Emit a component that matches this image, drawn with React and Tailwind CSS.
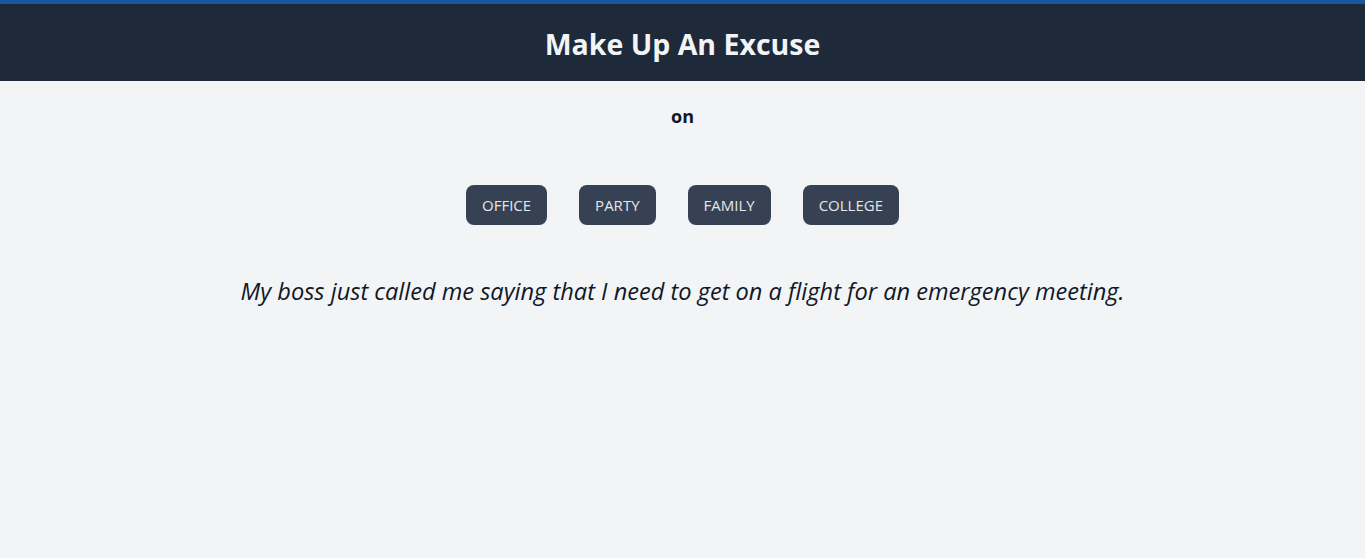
import { useState } from 'react'

// Excuses grouped by where you need to get out of.
const excuses = {
  office: [
    'My boss just called me saying that I need to get on a flight for an emergency meeting.',
    'I have to finish a report that is due first thing tomorrow morning.',
  ],
  party: [
    'I already promised a friend I would help them move this weekend.',
    'I am feeling a bit under the weather tonight.',
  ],
  family: [
    'My cousin is visiting from out of town and I have to pick them up.',
    'We have a family dinner planned that I cannot miss.',
  ],
  college: [
    'I have an exam tomorrow and I still have three chapters to cover.',
    'My group project meeting got moved to tonight.',
  ],
}

const categories = ['office', 'party', 'family', 'college']

const App = () => {
  const [excuse, setExcuse] = useState(excuses.office[0])

  // Pick a random excuse from the chosen category.
  const handleClick = category => {
    const list = excuses[category]
    setExcuse(list[Math.floor(Math.random() * list.length)])
  }

  return (
    <div
      className="min-h-screen bg-gray-100 text-gray-900"
      style={{ fontFamily: '"Open Sans", "Noto Sans", sans-serif' }}
    >
      <header className="h-[81px] border-t-4 border-[#1b55a0] bg-gray-800 flex items-center justify-center">
        <h1 className="text-[28.5px] leading-9 font-bold text-gray-100 pt-[2px]">
          Make Up An Excuse
        </h1>
      </header>
      <div className="flex flex-col items-center">
        <p className="mt-[21px] text-lg font-bold leading-7">on</p>
        <div className="mt-[55px] flex gap-8">
          {categories.map(category => (
            <button
              key={category}
              onClick={() => handleClick(category)}
              className="h-10 px-4 rounded-lg bg-gray-700 text-[15px] text-gray-200 uppercase"
            >
              {category}
            </button>
          ))}
        </div>
        <p className="mt-[50px] text-[23.6px] italic leading-8 text-gray-900 text-center">
          {excuse}
        </p>
      </div>
    </div>
  )
}

export default App
